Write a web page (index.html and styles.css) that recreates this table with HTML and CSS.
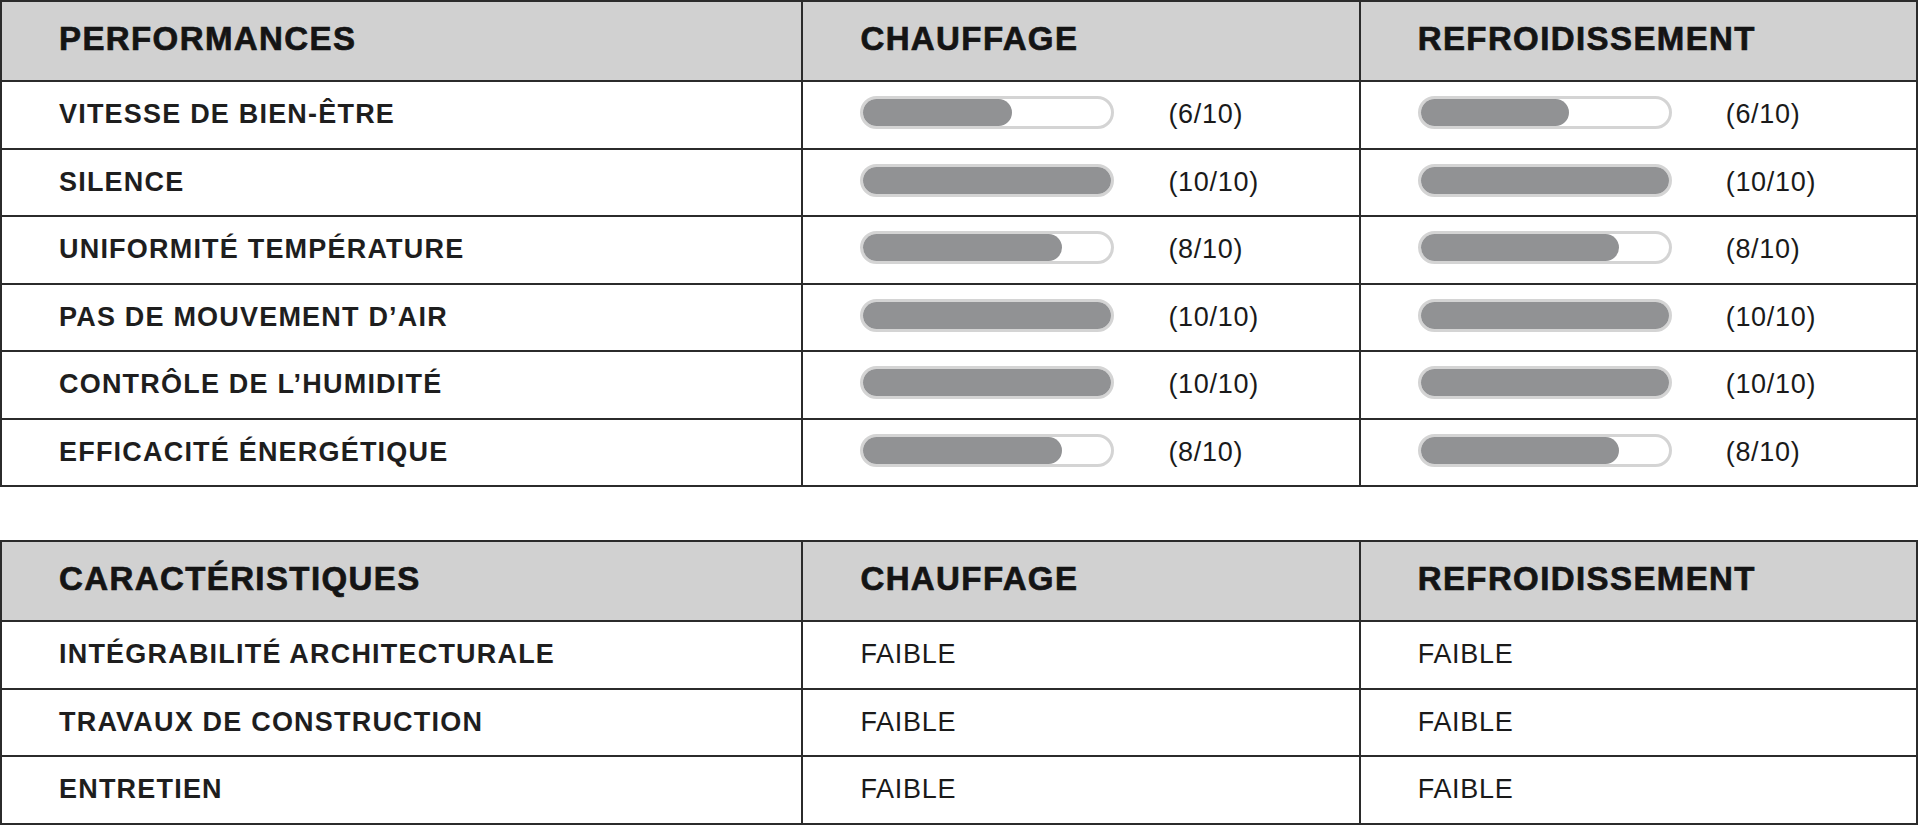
FILE: index.html
```html
<!DOCTYPE html>
<html lang="fr">
<head>
<meta charset="utf-8">
<title>Performances</title>
<link rel="stylesheet" href="styles.css">
</head>
<body>
<table class="grid">
  <colgroup><col class="c1"><col class="c2"><col class="c3"></colgroup>
  <thead>
    <tr class="head"><th>PERFORMANCES</th><th>CHAUFFAGE</th><th>REFROIDISSEMENT</th></tr>
  </thead>
  <tbody>
    <tr><td class="label">VITESSE DE BIEN-ÊTRE</td>
      <td class="sc"><div class="score"><div class="bar"><div class="fill" style="width:60%"></div></div><span class="val">(6/10)</span></div></td>
      <td class="sc"><div class="score"><div class="bar"><div class="fill" style="width:60%"></div></div><span class="val">(6/10)</span></div></td></tr>
    <tr><td class="label">SILENCE</td>
      <td class="sc"><div class="score"><div class="bar"><div class="fill" style="width:100%"></div></div><span class="val">(10/10)</span></div></td>
      <td class="sc"><div class="score"><div class="bar"><div class="fill" style="width:100%"></div></div><span class="val">(10/10)</span></div></td></tr>
    <tr><td class="label">UNIFORMITÉ TEMPÉRATURE</td>
      <td class="sc"><div class="score"><div class="bar"><div class="fill" style="width:80%"></div></div><span class="val">(8/10)</span></div></td>
      <td class="sc"><div class="score"><div class="bar"><div class="fill" style="width:80%"></div></div><span class="val">(8/10)</span></div></td></tr>
    <tr><td class="label">PAS DE MOUVEMENT D’AIR</td>
      <td class="sc"><div class="score"><div class="bar"><div class="fill" style="width:100%"></div></div><span class="val">(10/10)</span></div></td>
      <td class="sc"><div class="score"><div class="bar"><div class="fill" style="width:100%"></div></div><span class="val">(10/10)</span></div></td></tr>
    <tr><td class="label">CONTRÔLE DE L’HUMIDITÉ</td>
      <td class="sc"><div class="score"><div class="bar"><div class="fill" style="width:100%"></div></div><span class="val">(10/10)</span></div></td>
      <td class="sc"><div class="score"><div class="bar"><div class="fill" style="width:100%"></div></div><span class="val">(10/10)</span></div></td></tr>
    <tr><td class="label">EFFICACITÉ ÉNERGÉTIQUE</td>
      <td class="sc"><div class="score"><div class="bar"><div class="fill" style="width:80%"></div></div><span class="val">(8/10)</span></div></td>
      <td class="sc"><div class="score"><div class="bar"><div class="fill" style="width:80%"></div></div><span class="val">(8/10)</span></div></td></tr>
  </tbody>
</table>

<table class="grid second">
  <colgroup><col class="c1"><col class="c2"><col class="c3"></colgroup>
  <thead>
    <tr class="head"><th>CARACTÉRISTIQUES</th><th>CHAUFFAGE</th><th>REFROIDISSEMENT</th></tr>
  </thead>
  <tbody>
    <tr><td class="label">INTÉGRABILITÉ ARCHITECTURALE</td><td class="val">FAIBLE</td><td class="val">FAIBLE</td></tr>
    <tr><td class="label">TRAVAUX DE CONSTRUCTION</td><td class="val">FAIBLE</td><td class="val">FAIBLE</td></tr>
    <tr><td class="label">ENTRETIEN</td><td class="val">FAIBLE</td><td class="val">FAIBLE</td></tr>
  </tbody>
</table>
</body>
</html>
```
FILE: styles.css
```css
html, body {
  margin: 0;
  padding: 0;
  background: #ffffff;
}
body {
  font-family: "Liberation Sans", Arial, sans-serif;
  color: #1a1a1a;
}
.grid {
  border-collapse: collapse;
  table-layout: fixed;
  width: 1918px;
  margin-top: 0;
}
.grid.second {
  margin-top: 53px;
}
.c1 { width: 801px; }
.c2 { width: 557px; }
.c3 { width: 557px; }
.grid th,
.grid td {
  border: 2px solid #2b2b2b;
  padding: 0 0 0 57px;
  text-align: left;
  vertical-align: middle;
}
.head th {
  background: #d1d1d1;
  height: 73px;
  padding-bottom: 5px;
  font-size: 33px;
  font-weight: 700;
  letter-spacing: 1.4px;
  color: #141414;
  -webkit-text-stroke: 0.7px #141414;
}
.grid td {
  height: 65.5px;
}
.grid td.sc {
  height: 61.5px;
  padding-bottom: 4px;
}
.label {
  font-size: 27px;
  font-weight: 700;
  letter-spacing: 1.2px;
  color: #1e1e1e;
}
.val {
  font-size: 27px;
  font-weight: 400;
  letter-spacing: 0.7px;
  color: #1a1a1a;
}
.score {
  display: flex;
  align-items: center;
  gap: 54px;
}
.score .val {
  position: relative;
  top: 2px;
}
.bar {
  box-sizing: border-box;
  width: 254px;
  height: 33px;
  border: 3px solid #d4d4d4;
  border-radius: 17px;
  background: #ffffff;
  display: flex;
}
.fill {
  height: 100%;
  background: #919294;
  border-radius: 14px;
}
```
